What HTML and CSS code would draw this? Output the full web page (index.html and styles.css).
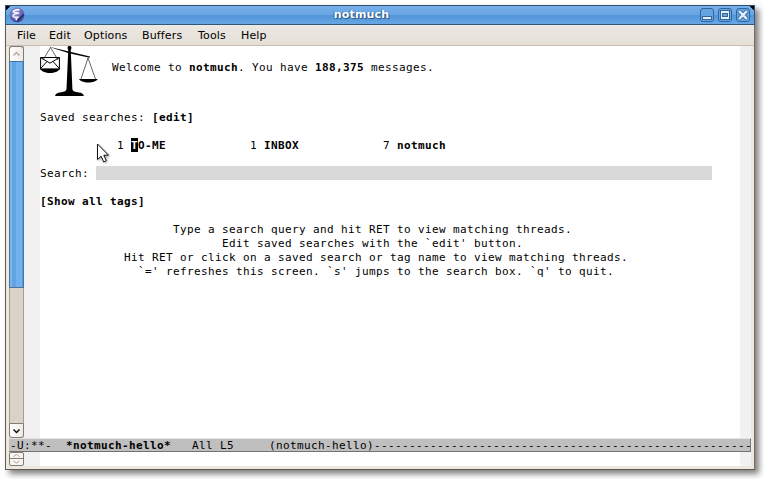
FILE: index.html
```html
<!DOCTYPE html>
<html lang="en">
<head>
<meta charset="utf-8">
<title>notmuch</title>
<link rel="stylesheet" href="styles.css">
</head>
<body>
<div class="window">
  <header class="titlebar">
    <svg class="app-icon" width="16" height="16" viewBox="0 0 16 16">
      <defs><radialGradient id="orb" cx=".4" cy=".3" r=".75"><stop offset="0" stop-color="#9496d4"/><stop offset=".6" stop-color="#6466b4"/><stop offset="1" stop-color="#40408a"/></radialGradient></defs>
      <circle cx="8" cy="8" r="7.4" fill="url(#orb)"/>
      <path d="M10.500 2.600C7 2.800 4 3.200 4.300 4.800c.4 1 3 .8 5.700 1.200C7.500 6.500 4 7.200 4 9c0 1.500 3 1.300 5.500 1C7.300 10.800 6 12 8.200 12.800" fill="none" stroke="#f4f4ff" stroke-width="1.600"/>
      <path d="M14.500 7.500 8.500 14" stroke="#20205c" stroke-width="1.200"/>
    </svg>
    <h1 class="title">notmuch</h1>
    <div class="controls">
      <svg class="control" width="14" height="14" viewBox="0 0 14 14"><rect class="control-box" x=".5" y=".5" width="13" height="13" rx="2.500"/><rect class="control-mark" x="2.500" y="8.500" width="9" height="3"/></svg>
      <svg class="control" width="14" height="14" viewBox="0 0 14 14"><rect class="control-box" x=".5" y=".5" width="13" height="13" rx="2.500"/><rect class="control-mark" x="2.500" y="2.500" width="9" height="9"/><rect class="control-hole" x="4.500" y="5.500" width="5" height="3"/></svg>
      <svg class="control" width="14" height="14" viewBox="0 0 14 14"><rect class="control-box" x=".5" y=".5" width="13" height="13" rx="2.500"/><path d="M3 3l8 8M11 3l-8 8" stroke="#31659c" stroke-width="4"/><path d="M3.200 3.200l7.600 7.600M10.800 3.200l-7.600 7.600" stroke="#e3f0fb" stroke-width="2.400"/></svg>
    </div>
  </header>
  <nav class="menubar">
    <span class="m-file">File</span><span class="m-edit">Edit</span><span class="m-options">Options</span><span class="m-buffers">Buffers</span><span class="m-tools">Tools</span><span>Help</span>
  </nav>
  <main class="frame">
    <div class="editor">
      <div class="scrollbar">
        <div class="arrow up"><svg width="9" height="6" viewBox="0 0 9 6"><path d="M1.500 4.500l3-3 3 3"/></svg></div>
        <div class="thumb"></div>
        <div class="trough"></div>
        <div class="arrow down"><svg width="9" height="6" viewBox="0 0 9 6"><path d="M1.500 1.500l3 3 3-3"/></svg></div>
      </div>
      <div class="fringe"></div>
      <div class="buffer">
        <div class="welcome">
          <svg class="logo" width="58" height="50" viewBox="0 0 58 50">
            <circle cx="29.500" cy="1.900" r="2"/>
            <path d="M28.300 3h2.400l1.700 40c.2 2.500 3 3 6.500 3.500 2.500.3 4.500 1.200 5 3.500H15c.5-2.300 2.500-3.200 5-3.500 3.500-.5 6.300-1 6.500-3.500z"/>
            <path d="M8 .5 50 10.500 49.700 11.800 29 7.300z"/>
            <path d="M10.500 1.500 3 14M10.500 1.500 18 14M48 12 41 33M48 12 55.500 33" fill="none" stroke="#000" stroke-width=".6"/>
            <path d="M0 22.500h20c-1.500 3-5.500 4.500-10 4.500S1.500 25.500 0 22.500zM39 33h18.700c-1 2.300-5 3.500-9.300 3.500S40 35.300 39 33z"/>
            <path d="M.6 11.500h18.800v11.800H.6zM.6 11.500l9.400 5.700 9.400-5.700M.6 22.500 7 15.500M19.400 22.500 13 15.500" fill="none" stroke="#000"/>
          </svg><span class="greeting">  Welcome to <b>notmuch</b>. You have <b>188,375</b> messages.</span>
        </div>
        <div class="line"></div>
        <div class="line">Saved searches: <b>[edit]</b></div>
        <div class="line"></div>
        <div class="line">           1 <b><span class="point">T</span>O-ME</b>            1 <b>INBOX</b>            7 <b>notmuch</b></div>
        <div class="line"></div>
        <div class="line search"><span>Search: </span><span class="field"></span></div>
        <div class="line"></div>
        <div class="line"><b>[Show all tags]</b></div>
        <div class="line"></div>
        <div class="line">                   Type a search query and hit RET to view matching threads.</div>
        <div class="line">                          Edit saved searches with the `edit' button.</div>
        <div class="line">            Hit RET or click on a saved search or tag name to view matching threads.</div>
        <div class="line">              `=' refreshes this screen. `s' jumps to the search box. `q' to quit.</div>
        <svg class="pointer" width="14" height="22" viewBox="0 0 14 22"><path d="M1.500 2V17.500l3.600-3.300 2.600 5.700 2.600-1.200-2.500-5.500h4.700z"/></svg>
      </div>
      <div class="fringe"></div>
    </div>
    <div class="modeline">-U:**-  <b>*notmuch-hello*</b>   All L5     (notmuch-hello)------------------------------------------------------</div>
    <div class="minibuffer">
      <div class="mini-scroll">
        <svg width="15" height="14" viewBox="0 0 15 14"><rect x=".5" y=".5" width="14" height="13" rx="1.500"/><path d="M1 6.500h13" class="divider"/><path d="M4.500 4.500l3-2 3 2M4.500 9l3 2 3-2"/></svg>
      </div>
      <div class="fringe"></div>
      <div class="echo"></div>
      <div class="fringe"></div>
    </div>
  </main>
</div>
</body>
</html>
```
FILE: styles.css
```css
* { box-sizing: border-box; }
html, body { margin: 0; height: 100%; overflow: hidden; }
body { background: #fff; padding: 5px 0 0 5px; }

.window {
  width: 750px;
  height: 465px;
  display: flex;
  flex-direction: column;
  background: #ece8e0;
  border: 1px solid #625a52;
  border-top: 0;
  border-right-color: #756b61;
  box-shadow: 4px 4px 6px rgba(0, 0, 0, .5);
}

.titlebar {
  flex: none;
  height: 20px;
  margin: 0 -1px;
  padding: 0 5px;
  display: flex;
  align-items: center;
  justify-content: space-between;
  background:
    linear-gradient(135deg, #000 3px, transparent 3px),
    linear-gradient(225deg, #000 3px, transparent 3px),
    linear-gradient(#76b0eb 0, #69a5e2 48%, #5196d8 50%, #67a6e5 100%);
  border: 1px solid #30587f;
  border-top-color: #34506f;
}
.app-icon { margin-left: -2px; }
.title {
  margin: 0 2px 0 0;
  font: bold 11px/18px "DejaVu Sans", sans-serif;
  letter-spacing: .2px;
  color: #fff;
  text-shadow: 1px 1px 1px #265180, -1px 0 1px #3b70a8;
}
.controls { display: flex; gap: 4px; margin-right: -1px; }
.control-box { fill: #65a4e2; stroke: #31659c; }
.control-mark { fill: #e3f0fb; stroke: #31659c; }
.control-hole { fill: #65a4e2; stroke: #31659c; }

.menubar {
  flex: none;
  height: 21px;
  display: flex;
  padding-left: 11px;
  font: 11px/21px "DejaVu Sans", sans-serif;
  letter-spacing: .15px;
  color: #000;
  background: linear-gradient(#ece8e2, #e5dfd7);
  border-bottom: 1px solid #c9bdb1;
}
.m-file { width: 32px; }
.m-edit { width: 35px; }
.m-options { width: 58px; }
.m-buffers { width: 56px; }
.m-tools { width: 43px; }

.frame {
  flex: 1;
  display: flex;
  flex-direction: column;
  margin: 0 3px 3px;
  font: 11px/16px "DejaVu Sans Mono", monospace;
  letter-spacing: .378px;
  color: #000;
}
.editor, .minibuffer {
  display: grid;
  grid-template-columns: 15px 16px 700px 11px;
}
.editor { height: 392px; }
.fringe { background: #f1f1f1; }
.buffer { position: relative; background: #fff; }
.line { height: 14px; white-space: pre; }
.welcome { height: 50px; display: flex; white-space: pre; }
.greeting { padding-top: 14px; }
.point { background: #000; color: #fff; display: inline-block; height: 14px; width: 7px; vertical-align: top; }
.search { display: flex; }
.field { width: 616px; height: 14px; background: #d9d9d9; }
.pointer { position: absolute; left: 56px; top: 96px; fill: #fff; stroke: #111; filter: drop-shadow(1px 1px 1px rgba(0, 0, 0, .35)); }

.scrollbar { display: flex; flex-direction: column; background: #d9d2c7; }
.arrow {
  height: 15px;
  display: flex;
  align-items: center;
  justify-content: center;
  background: linear-gradient(90deg, #fff, #eeebe6);
  border: 1px solid #857b70;
}
.arrow path { fill: none; stroke: #111; stroke-width: 1.5; }
.up { border-radius: 3px 3px 0 0; border-bottom: 0; }
.up path { stroke: #b5aa9d; }
.down { border-radius: 0 0 3px 3px; }
.thumb {
  height: 227px;
  background: linear-gradient(90deg, #7ab5f0 0 2px, #62a3e2 2px 6px, #71b1ed 6px 12px, #589bdb 12px);
  border: 1px solid #4b749c;
}
.trough { flex: 1; border: 1px solid #a99d91; border-width: 0 1px; }

.modeline {
  height: 14px;
  padding-left: 1px;
  line-height: 13px;
  white-space: pre;
  overflow: hidden;
  background: #bfbfbf;
  border-top: 1px solid #e3e3e3;
  border-right: 1px solid #777;
  border-bottom: 1px solid #737373;
}
.minibuffer { height: 14px; }
.echo { background: #fff; }
.mini-scroll svg { display: block; fill: none; stroke: #aea397; }
.mini-scroll rect { fill: #f8f6f3; stroke: #857b70; }
.mini-scroll .divider { stroke: #857b70; }
```
